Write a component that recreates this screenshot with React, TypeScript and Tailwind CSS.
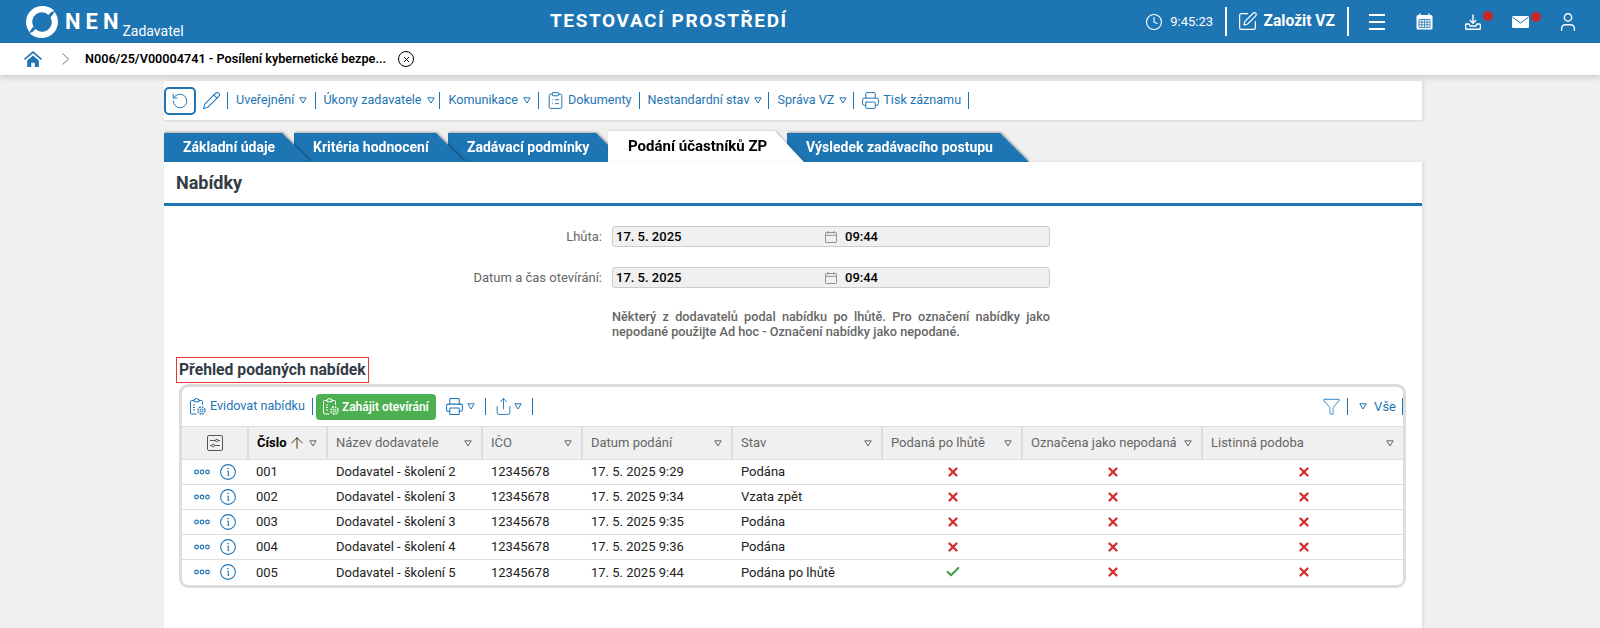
import React from 'react';
import { Clock, SquarePen, Pencil, RotateCcw, Printer, ClipboardList, Share, Funnel, ArrowUp, User, X, Check } from 'lucide-react';

const TABS = [
  { label: 'Základní údaje', w: 'w-[147px]', z: 'z-40' },
  { label: 'Kritéria hodnocení', w: 'w-[171px]', z: 'z-30' },
  { label: 'Zadávací podmínky', w: 'w-[177px]', z: 'z-20' },
  { label: 'Podání účastníků ZP', w: 'w-[196px]', z: 'z-50', active: true },
  { label: 'Výsledek zadávacího postupu', w: 'w-[242px]', z: 'z-10' },
];

const COLUMNS = [
  { label: 'Číslo', w: 'w-[79px]' },
  { label: 'Název dodavatele', w: 'w-[155px]' },
  { label: 'IČO', w: 'w-[100px]' },
  { label: 'Datum podání', w: 'w-[150px]' },
  { label: 'Stav', w: 'w-[150px]' },
  { label: 'Podaná po lhůtě', w: 'w-[140px]' },
  { label: 'Označena jako nepodaná', w: 'w-[180px]' },
  { label: 'Listinná podoba', w: 'w-[201px]' },
];

const ROWS = [
  { no: '001', name: 'Dodavatel - školení 2', date: '17. 5. 2025 9:29', state: 'Podána', late: false },
  { no: '002', name: 'Dodavatel - školení 3', date: '17. 5. 2025 9:34', state: 'Vzata zpět', late: false },
  { no: '003', name: 'Dodavatel - školení 3', date: '17. 5. 2025 9:35', state: 'Podána', late: false },
  { no: '004', name: 'Dodavatel - školení 4', date: '17. 5. 2025 9:36', state: 'Podána', late: false },
  { no: '005', name: 'Dodavatel - školení 5', date: '17. 5. 2025 9:44', state: 'Podána po lhůtě', late: true },
];

const Triangle = ({ className = '' }: { className?: string }) => (
  <svg className={`w-[8px] h-[7px] shrink-0 ${className}`} viewBox="0 0 8 7" fill="none" stroke="currentColor" strokeWidth="1">
    <path d="M0.8 0.8h6.4L4 6z" />
  </svg>
);

const Sep = ({ className = '' }: { className?: string }) => <span className={`w-px h-[17px] bg-[#1e75b3] shrink-0 ${className}`} />;

const Logo = () => (
  <svg className="w-[32px] h-[32px] shrink-0" viewBox="0 0 32 32" fill="#fff">
    <path d="M3.6 26.2C-1.2 20.4-1.2 11.4 4 5.6 9.4-.6 18.4-1.6 25 2.2c1.6.9 2.9 2.1 3.6 3.2-2.2-.3-4.3 1.2-6.1 3.7A9.5 9.5 0 0 0 7.5 20.5c-1.5 1.8-3 3.6-3.9 5.7z" />
    <path transform="rotate(180 16 16)" d="M3.6 26.2C-1.2 20.4-1.2 11.4 4 5.6 9.4-.6 18.4-1.6 25 2.2c1.6.9 2.9 2.1 3.6 3.2-2.2-.3-4.3 1.2-6.1 3.7A9.5 9.5 0 0 0 7.5 20.5c-1.5 1.8-3 3.6-3.9 5.7z" />
  </svg>
);

const HomeIcon = () => (
  <svg className="w-[18px] h-[16px]" viewBox="0 0 17 15" fill="#1e75b3">
    <path d="M8.5 0L0 7.2l1 1.2L8.5 2l7.5 6.4 1-1.2z" />
    <path d="M3 9l5.5-4.7L14 9v6h-3.8v-4H6.8v4H3z" />
  </svg>
);

const CalendarFilled = () => (
  <svg className="w-[17px] h-[17px]" viewBox="0 0 17 17">
    <rect x="0.5" y="2" width="16" height="14.5" rx="1.5" fill="#fff" />
    <path d="M4 0.5v3M13 0.5v3" stroke="#fff" strokeWidth="1.5" />
    <path d="M3 6.5h11v8H3zM3 9.2h11M3 11.8h11M5.8 6.5v8M8.5 6.5v8M11.2 6.5v8" fill="none" stroke="#1e75b3" strokeWidth="0.8" />
  </svg>
);

const DownloadTray = () => (
  <svg className="w-[16px] h-[16px]" viewBox="0 0 16 16" fill="none" stroke="#fff" strokeWidth="1.4">
    <path d="M8 0.5v8.5M4.8 6L8 9.2 11.2 6" />
    <path d="M4 10H1.4a.8.8 0 00-.8.8v3.5a1 1 0 001 1h12.8a1 1 0 001-1v-3.5a.8.8 0 00-.8-.8H12l-1.2 2H5.2z" />
  </svg>
);

const MailFilled = () => (
  <svg className="w-[17px] h-[12px]" viewBox="0 0 17 12">
    <rect width="17" height="12" rx="1.2" fill="#fff" />
    <path d="M0.5 1.2L8.5 7l8-5.8" fill="none" stroke="#1e75b3" strokeWidth="1" />
  </svg>
);

const DotsIcon = () => (
  <svg className="w-[16px] h-[6px]" viewBox="0 0 16 6" fill="none" stroke="#1e75b3" strokeWidth="1.2">
    <circle cx="2.5" cy="3" r="1.8" />
    <circle cx="8" cy="3" r="1.8" />
    <circle cx="13.5" cy="3" r="1.8" />
  </svg>
);

const InfoIcon = () => (
  <svg className="w-[16px] h-[16px]" viewBox="0 0 16 16" fill="none" stroke="#1e75b3">
    <circle cx="8" cy="8" r="7.4" strokeWidth="1.1" />
    <path d="M7.2 7.2h1v4.2h1" strokeWidth="1.1" />
    <circle cx="7.9" cy="4.6" r="0.5" fill="#1e75b3" strokeWidth="0.6" />
  </svg>
);

const CalendarSmall = () => (
  <svg className="w-[12px] h-[12px] shrink-0" viewBox="0 0 12 12" fill="none" stroke="#888" strokeWidth="0.9">
    <rect x="0.5" y="1.5" width="11" height="10" rx="0.8" />
    <path d="M0.5 4.3h11M3 0v2.5M9 0v2.5" />
  </svg>
);

const GearClipboard = ({ color }: { color: string }) => (
  <svg className="w-[16px] h-[18px] shrink-0" viewBox="0 0 16 18" fill="none" stroke={color} strokeWidth="1">
    <path d="M6.5 16H1.5a1 1 0 01-1-1V3.5a1 1 0 011-1H4M9 2.5h2.5a1 1 0 011 1V7" />
    <path d="M4 1.5h1.2a1.3 1.3 0 012.6 0H9v2.3H4z" />
    <path d="M3 7h2M3 9.5h2M3 12h2" />
    <circle cx="11.5" cy="12.5" r="1.5" />
    <circle cx="11.5" cy="12.5" r="3.6" strokeDasharray="1.8 1" strokeWidth="1.4" />
  </svg>
);

const SettingsBox = () => (
  <svg className="mx-auto block w-[16px] h-[16px]" viewBox="0 0 16 16" fill="none" stroke="#555" strokeWidth="1">
    <rect x="0.5" y="0.5" width="15" height="15" rx="1.5" />
    <path d="M3 5.5h5.5M11 5.5h2M3 10.5h2M7.5 10.5H13" />
    <circle cx="9.8" cy="5.5" r="1.3" />
    <circle cx="6.2" cy="10.5" r="1.3" />
  </svg>
);

const Cross = () => <X className="mx-auto translate-x-[1px]" size={14} strokeWidth={4} color="#d32f2f" />;

const DateField = ({ label }: { label: string }) => (
  <div className="flex items-center">
    <label className="w-[438px] text-right text-[13px] text-[#666]">{label}</label>
    <div className="ml-[10px] w-[438px] h-[21px] flex items-center bg-[#f0f0f0] border border-[#ccc] rounded-[3px] pl-[3px] text-[13px] font-medium text-black">
      <span className="w-[209px]">17. 5. 2025</span>
      <CalendarSmall />
      <span className="ml-[8px]">09:44</span>
    </div>
  </div>
);

const ToolLink = ({ label, menu, icon }: { label: string; menu?: boolean; icon?: React.ReactNode }) => (
  <span className="flex items-center text-[12.6px] text-[#1e75b3] shrink-0">
    {icon}
    {label}
    {menu && <Triangle className="ml-[5px]" />}
  </span>
);

export default function App() {
  return (
    <div className="w-[1600px] h-[628px] overflow-hidden bg-[#f0f0f0] flex flex-col font-['Roboto',sans-serif]">
      {/* Top bar */}
      <header className="h-[43px] shrink-0 bg-[#1e75b3] text-white flex items-center">
        <div className="w-[550px] shrink-0 flex items-center pl-[26px]">
          <Logo />
          <span className="ml-[7px] text-[22px] leading-none font-bold tracking-[5px]">NEN</span>
          <span className="-ml-[1px] mt-[19px] text-[14px] leading-none">Zadavatel</span>
        </div>
        <div className="text-[19px] font-bold tracking-[1.6px] whitespace-nowrap">TESTOVACÍ PROSTŘEDÍ</div>
        <div className="ml-auto flex items-center pr-[21px]">
          <Clock size={18} strokeWidth={1.5} />
          <span className="ml-[7px] text-[13px]">9:45:23</span>
          <span className="ml-[12px] w-[2px] h-[29px] bg-white" />
          <SquarePen className="ml-[10px]" size={21} strokeWidth={1.4} />
          <span className="ml-[5.5px] text-[15.6px] font-bold">Založit VZ</span>
          <span className="ml-[12px] w-[2px] h-[29px] bg-white" />
          <div className="ml-[20px] w-[16px] flex flex-col gap-[5px]">
            <span className="h-[2px] bg-white" />
            <span className="h-[2px] bg-white" />
            <span className="h-[2px] bg-white" />
          </div>
          <span className="ml-[31px]"><CalendarFilled /></span>
          <span className="ml-[32px] relative">
            <DownloadTray />
            <span className="absolute -top-[3px] left-[18px] w-[10px] h-[10px] rounded-full bg-[#c62828]" />
          </span>
          <span className="ml-[31px] relative">
            <MailFilled />
            <span className="absolute -top-[4px] left-[19px] w-[10px] h-[10px] rounded-full bg-[#c62828]" />
          </span>
          <User className="ml-[28px]" size={22} strokeWidth={1.5} />
        </div>
      </header>

      {/* Breadcrumb */}
      <div className="h-[32px] shrink-0 bg-white flex items-center pl-[24px] shadow-[0_3px_6px_rgba(0,0,0,0.14)] z-[60] relative">
        <HomeIcon />
        <svg className="ml-[20px] w-[7px] h-[12px]" viewBox="0 0 7 12" fill="none" stroke="#777" strokeWidth="1">
          <path d="M0.5 0.5L6.5 6l-6 5.5" />
        </svg>
        <span className="ml-[16px] text-[12.65px] font-semibold text-black whitespace-nowrap">N006/25/V00004741 - Posílení kybernetické bezpe...</span>
        <span className="ml-[12px] w-[16px] h-[16px] rounded-full border-[1.5px] border-black flex items-center justify-center">
          <X size={9} strokeWidth={2.5} color="#000" />
        </span>
      </div>

      <main className="flex-1 min-h-0 ml-[164px] w-[1258px] pt-[6px] flex flex-col">
        {/* Action toolbar */}
        <div className="h-[40px] shrink-0 bg-white border-b border-[#ddd] shadow-[2px_0_3px_rgba(0,0,0,0.08)] flex items-center">
          <span className="w-[32px] h-[28px] border-2 border-[#1e75b3] rounded-[5px] flex items-center justify-center">
            <RotateCcw size={18} strokeWidth={1.3} color="#1e75b3" />
          </span>
          <Pencil className="ml-[6px]" size={19} strokeWidth={1.3} color="#1e75b3" />
          <Sep className="ml-[6px]" />
          <span className="ml-[8px]"><ToolLink label="Uveřejnění" menu /></span>
          <Sep className="ml-[8px]" />
          <span className="ml-[7px]"><ToolLink label="Úkony zadavatele" menu /></span>
          <Sep className="ml-[4px]" />
          <span className="ml-[9px]"><ToolLink label="Komunikace" menu /></span>
          <Sep className="ml-[7px]" />
          <span className="ml-[7px]">
            <ToolLink label="Dokumenty" icon={<ClipboardList className="mr-[3px]" size={19} strokeWidth={1.25} />} />
          </span>
          <Sep className="ml-[7px]" />
          <span className="ml-[8px]"><ToolLink label="Nestandardní stav" menu /></span>
          <Sep className="ml-[6px]" />
          <span className="ml-[8px]"><ToolLink label="Správa VZ" menu /></span>
          <Sep className="ml-[6px]" />
          <span className="ml-[7px]">
            <ToolLink label="Tisk záznamu" icon={<Printer className="mr-[3px]" size={19} strokeWidth={1.25} />} />
          </span>
          <Sep className="ml-[7px]" />
        </div>

        {/* Tabs */}
        <div className="mt-[10px] h-[31px] shrink-0 flex items-end">
          {TABS.map((tab) => (
            <div
              key={tab.label}
              className={`relative ${tab.z} ${tab.w} -mr-[17px] shrink-0 ${
                tab.active ? '[filter:drop-shadow(1px_0_1px_rgba(0,0,0,0.25))]' : '[filter:drop-shadow(1px_-1px_1px_rgba(0,0,0,0.3))]'
              }`}
            >
              <div
                className={`flex items-center font-bold whitespace-nowrap [clip-path:polygon(0_0,calc(100%-29px)_0,100%_100%,0_100%)] ${
                  tab.active ? 'h-[31px] pl-[20px] text-[15px] bg-white text-black' : 'h-[29px] pl-[19px] text-[14px] bg-[#1e75b3] text-white'
                }`}
              >
                {tab.label}
              </div>
            </div>
          ))}
        </div>

        {/* Panel */}
        <section className="flex-1 bg-white shadow-[2px_0_3px_rgba(0,0,0,0.08)] relative z-[55]">
          <div className="h-[44px] border-b-[3px] border-[#1e75b3] flex items-center pl-[12px] text-[18px] font-bold text-[#333c45]">Nabídky</div>

          <div className="mt-[20px] flex flex-col gap-[20px]">
            <DateField label="Lhůta:" />
            <DateField label="Datum a čas otevírání:" />
          </div>

          <p className="mt-[21px] ml-[448px] w-[438px] text-[12.7px] leading-[15px] font-medium text-[#666] text-justify">
            Některý z dodavatelů podal nabídku po lhůtě. Pro označení nabídky jako nepodané použijte Ad hoc - Označení nabídky jako nepodané.
          </p>

          <div className="mt-[18px] ml-[12px] w-[193px] h-[26px] border border-[#e53935] flex items-center pl-[2px] text-[15.7px] font-bold text-[#333c45] whitespace-nowrap">
            Přehled podaných nabídek
          </div>

          {/* Grid card */}
          <div className="ml-[15px] mt-[1px] w-[1227px] border-[3px] border-[#ddd] rounded-[9px] overflow-hidden bg-white">
            <div className="h-[39px] flex items-center pl-[8px]">
              <GearClipboard color="#1e75b3" />
              <span className="ml-[4px] text-[12.6px] text-[#1e75b3]">Evidovat nabídku</span>
              <Sep className="ml-[7px]" />
              <span className="ml-[3px] h-[26px] w-[120px] rounded-[4px] bg-[#4caf50] flex items-center pl-[7px] text-[12px] font-semibold text-white">
                <GearClipboard color="#fff" />
                <span className="ml-[3px] whitespace-nowrap">Zahájit otevírání</span>
              </span>
              <Printer className="ml-[9.5px]" size={19} strokeWidth={1.3} color="#1e75b3" />
              <Triangle className="ml-[3px] text-[#1e75b3]" />
              <Sep className="ml-[10px]" />
              <Share className="ml-[8px]" size={19} strokeWidth={1.15} color="#1e75b3" />
              <Triangle className="ml-[1px] text-[#1e75b3]" />
              <Sep className="ml-[10px]" />
              <Funnel className="ml-auto" size={19} strokeWidth={1.3} color="#5b9fd0" />
              <Sep className="ml-[6px]" />
              <Triangle className="ml-[11px] text-[#1e75b3]" />
              <span className="ml-[7px] text-[13px] text-[#1e75b3]">Vše</span>
              <Sep className="ml-[6px]" />
            </div>

            <table className="table-fixed w-[1221px] border-collapse text-[13px]">
              <thead>
                <tr className="h-[33px] bg-[#f0f0f0] border-y border-[#ddd]">
                  <th className="w-[66px] border-r-2 border-[#ddd] font-normal">
                    <SettingsBox />
                  </th>
                  {COLUMNS.map((col, i) => (
                    <th key={col.label} className={`${col.w} border-r-2 last:border-r-0 border-[#ddd] pl-[8px] pr-[9px] text-left font-normal`}>
                      <span className="flex items-center">
                        <span className={i === 0 ? 'font-bold text-black' : 'text-[#666]'}>{col.label}</span>
                        {i === 0 && <ArrowUp className="ml-[1px]" size={18} strokeWidth={1.3} color="#4a300c" />}
                        <Triangle className="ml-auto text-[#666]" />
                      </span>
                    </th>
                  ))}
                </tr>
              </thead>
              <tbody className="text-[#222]">
                {ROWS.map((row) => (
                  <tr key={row.no} className="h-[25px] border-b border-[#ddd] last:border-b-0">
                    <td>
                      <span className="flex items-center pl-[12px] gap-[10px]">
                        <DotsIcon />
                        <InfoIcon />
                      </span>
                    </td>
                    <td className="pl-[8px]">{row.no}</td>
                    <td className="pl-[9px] whitespace-nowrap">{row.name}</td>
                    <td className="pl-[9px]">12345678</td>
                    <td className="pl-[9px]">{row.date}</td>
                    <td className="pl-[9px]">{row.state}</td>
                    <td>
                      {row.late ? <Check className="mx-auto translate-x-[1px]" size={16} strokeWidth={3.2} color="#43a047" /> : <Cross />}
                    </td>
                    <td><Cross /></td>
                    <td><Cross /></td>
                  </tr>
                ))}
              </tbody>
            </table>
          </div>
        </section>
      </main>
    </div>
  );
}
